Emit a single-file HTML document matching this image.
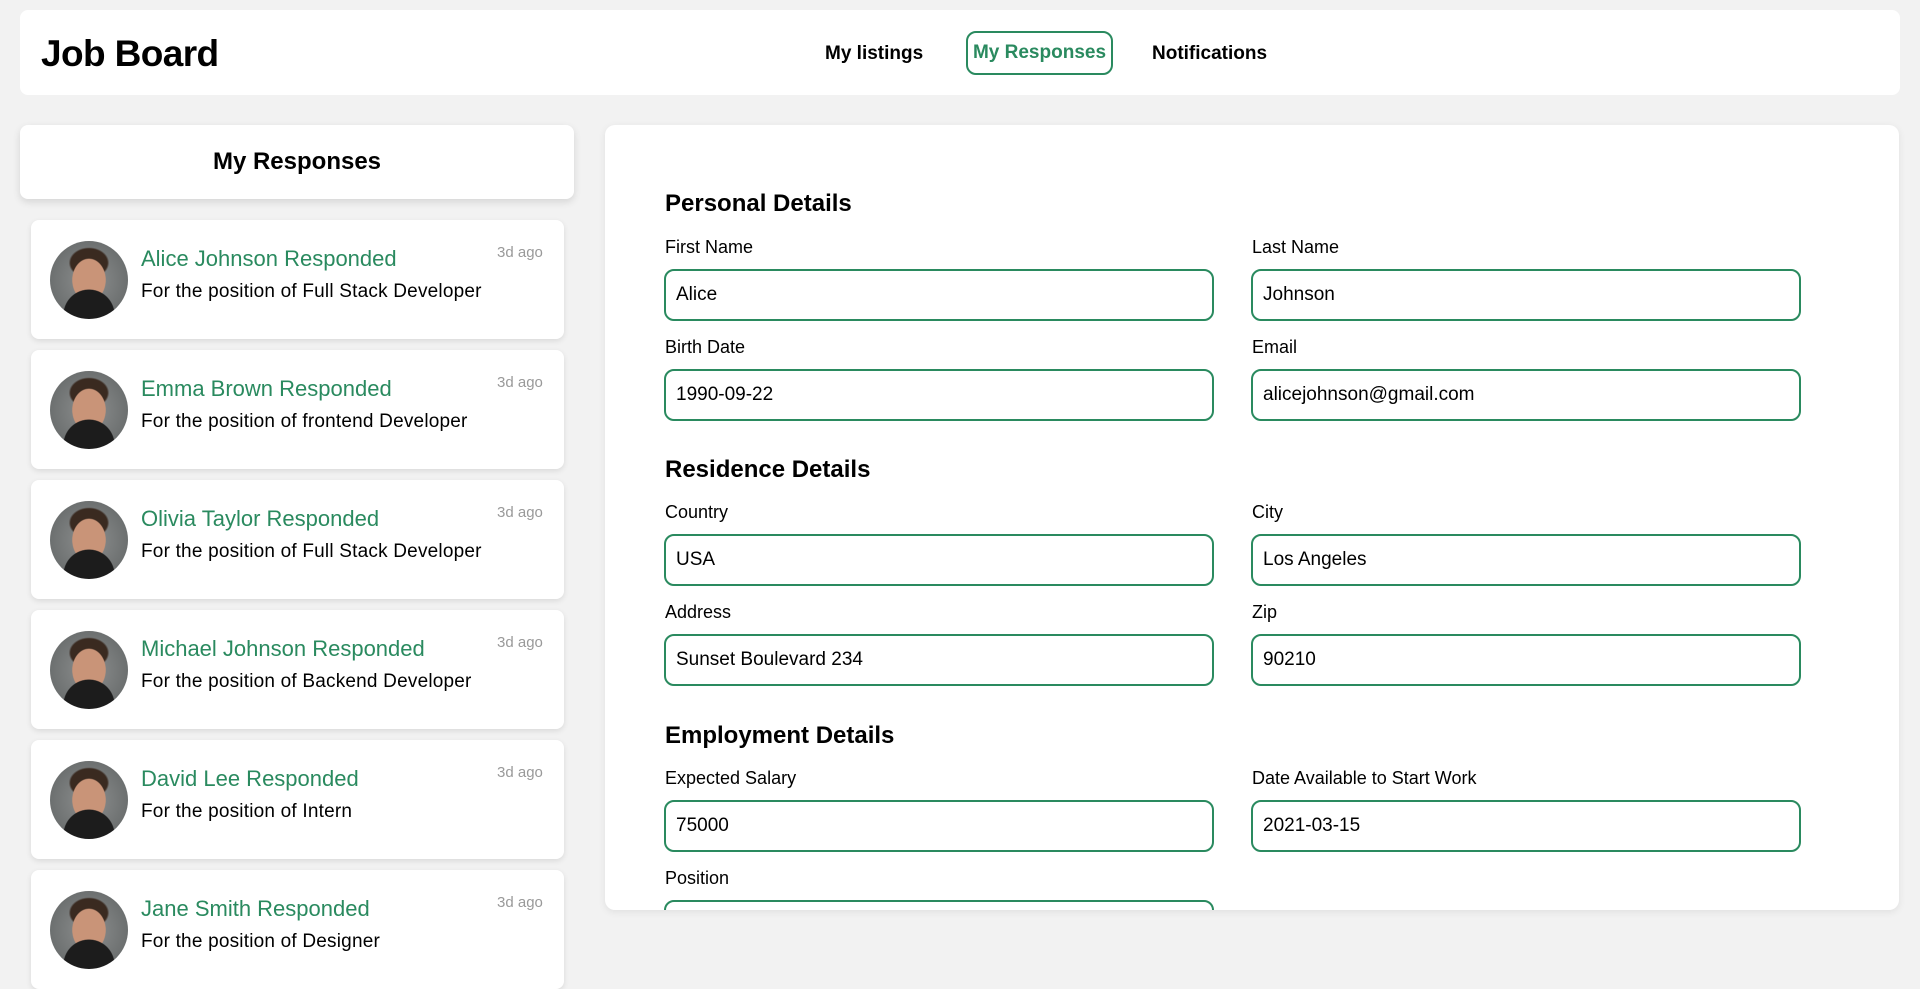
<!DOCTYPE html>
<html><head><meta charset="utf-8"><style>
*{box-sizing:border-box;margin:0;padding:0}
body{width:1920px;height:923px;background:#f2f2f2;font-family:"Liberation Sans",sans-serif;position:relative;overflow:hidden;color:#000}
.hdr{position:absolute;left:20px;top:10px;width:1880px;height:85px;background:#fff;border-radius:8px}
.logo{position:absolute;left:41px;top:33px;font-size:37px;font-weight:bold;letter-spacing:-0.6px}
.nav{position:absolute;top:43px;font-size:19px;font-weight:bold}
.navb{position:absolute;left:966px;top:31px;width:147px;height:44px;border:2.5px solid #2a8a5f;border-radius:10px;color:#2a8a5f;font-size:19px;font-weight:bold;text-align:center;line-height:39px}
.side{position:absolute;left:20px;top:125px;width:554px;height:74px;background:#fff;border-radius:8px;box-shadow:0 3px 8px rgba(0,0,0,.12);text-align:center;font-size:24px;font-weight:bold;line-height:74px}
.card{position:absolute;left:31px;width:533px;height:119px;background:#fff;border-radius:8px;box-shadow:0 2px 6px rgba(0,0,0,.1)}
.av{position:absolute;left:19px;top:21px;width:78px;height:78px;border-radius:50%;background:radial-gradient(circle at 50% 95%,#1c1c1c 0 30%,transparent 31%),radial-gradient(ellipse 22% 28% at 50% 50%,#c99478 0 95%,transparent 100%),radial-gradient(ellipse 26% 20% at 50% 28%,#3a2a20 0 90%,transparent 100%),radial-gradient(circle,#8e9090,#5e6262);overflow:hidden}
.nm{position:absolute;left:110px;top:26px;font-size:22px;color:#2a8a5f}
.sub{position:absolute;left:110px;top:61px;font-size:19px;letter-spacing:0.2px}
.ago{position:absolute;left:466px;top:24px;font-size:15px;color:#999}
.main{position:absolute;left:605px;top:125px;width:1294px;height:785px;background:#fff;border-radius:10px;box-shadow:0 2px 8px rgba(0,0,0,.08);overflow:hidden}
.h{position:absolute;left:60px;font-size:24px;font-weight:bold}
.l{position:absolute;font-size:18px}
.in{position:absolute;width:550px;height:52px;border:2.5px solid #2a8a5f;border-radius:10px;font-size:19px;line-height:47px;padding-left:10px}
</style></head><body>
<div class="hdr"></div>
<div class="logo">Job Board</div>
<div class="nav" style="left:825px">My listings</div>
<div class="navb">My Responses</div>
<div class="nav" style="left:1152px">Notifications</div>

<div class="side">My Responses</div>
<div class="card" style="top:220px"><div class="av"></div><div class="nm">Alice Johnson Responded</div><div class="sub">For the position of Full Stack Developer</div><div class="ago">3d ago</div></div>
<div class="card" style="top:350px"><div class="av"></div><div class="nm">Emma Brown Responded</div><div class="sub">For the position of frontend Developer</div><div class="ago">3d ago</div></div>
<div class="card" style="top:480px"><div class="av"></div><div class="nm">Olivia Taylor Responded</div><div class="sub">For the position of Full Stack Developer</div><div class="ago">3d ago</div></div>
<div class="card" style="top:610px"><div class="av"></div><div class="nm">Michael Johnson Responded</div><div class="sub">For the position of Backend Developer</div><div class="ago">3d ago</div></div>
<div class="card" style="top:740px"><div class="av"></div><div class="nm">David Lee Responded</div><div class="sub">For the position of Intern</div><div class="ago">3d ago</div></div>
<div class="card" style="top:870px"><div class="av"></div><div class="nm">Jane Smith Responded</div><div class="sub">For the position of Designer</div><div class="ago">3d ago</div></div>

<div class="main">
<div class="h" style="top:65px">Personal Details</div>
<div class="l" style="left:60px;top:112px">First Name</div><div class="l" style="left:647px;top:112px">Last Name</div>
<div class="in" style="left:59px;top:144px">Alice</div><div class="in" style="left:646px;top:144px">Johnson</div>
<div class="l" style="left:60px;top:212px">Birth Date</div><div class="l" style="left:647px;top:212px">Email</div>
<div class="in" style="left:59px;top:244px">1990-09-22</div><div class="in" style="left:646px;top:244px">alicejohnson@gmail.com</div>
<div class="h" style="top:331px">Residence Details</div>
<div class="l" style="left:60px;top:377px">Country</div><div class="l" style="left:647px;top:377px">City</div>
<div class="in" style="left:59px;top:409px">USA</div><div class="in" style="left:646px;top:409px">Los Angeles</div>
<div class="l" style="left:60px;top:477px">Address</div><div class="l" style="left:647px;top:477px">Zip</div>
<div class="in" style="left:59px;top:509px">Sunset Boulevard 234</div><div class="in" style="left:646px;top:509px">90210</div>
<div class="h" style="top:597px">Employment Details</div>
<div class="l" style="left:60px;top:643px">Expected Salary</div><div class="l" style="left:647px;top:643px">Date Available to Start Work</div>
<div class="in" style="left:59px;top:675px">75000</div><div class="in" style="left:646px;top:675px">2021-03-15</div>
<div class="l" style="left:60px;top:743px">Position</div>
<div class="in" style="left:59px;top:775px"></div>
</div>
</body></html>
